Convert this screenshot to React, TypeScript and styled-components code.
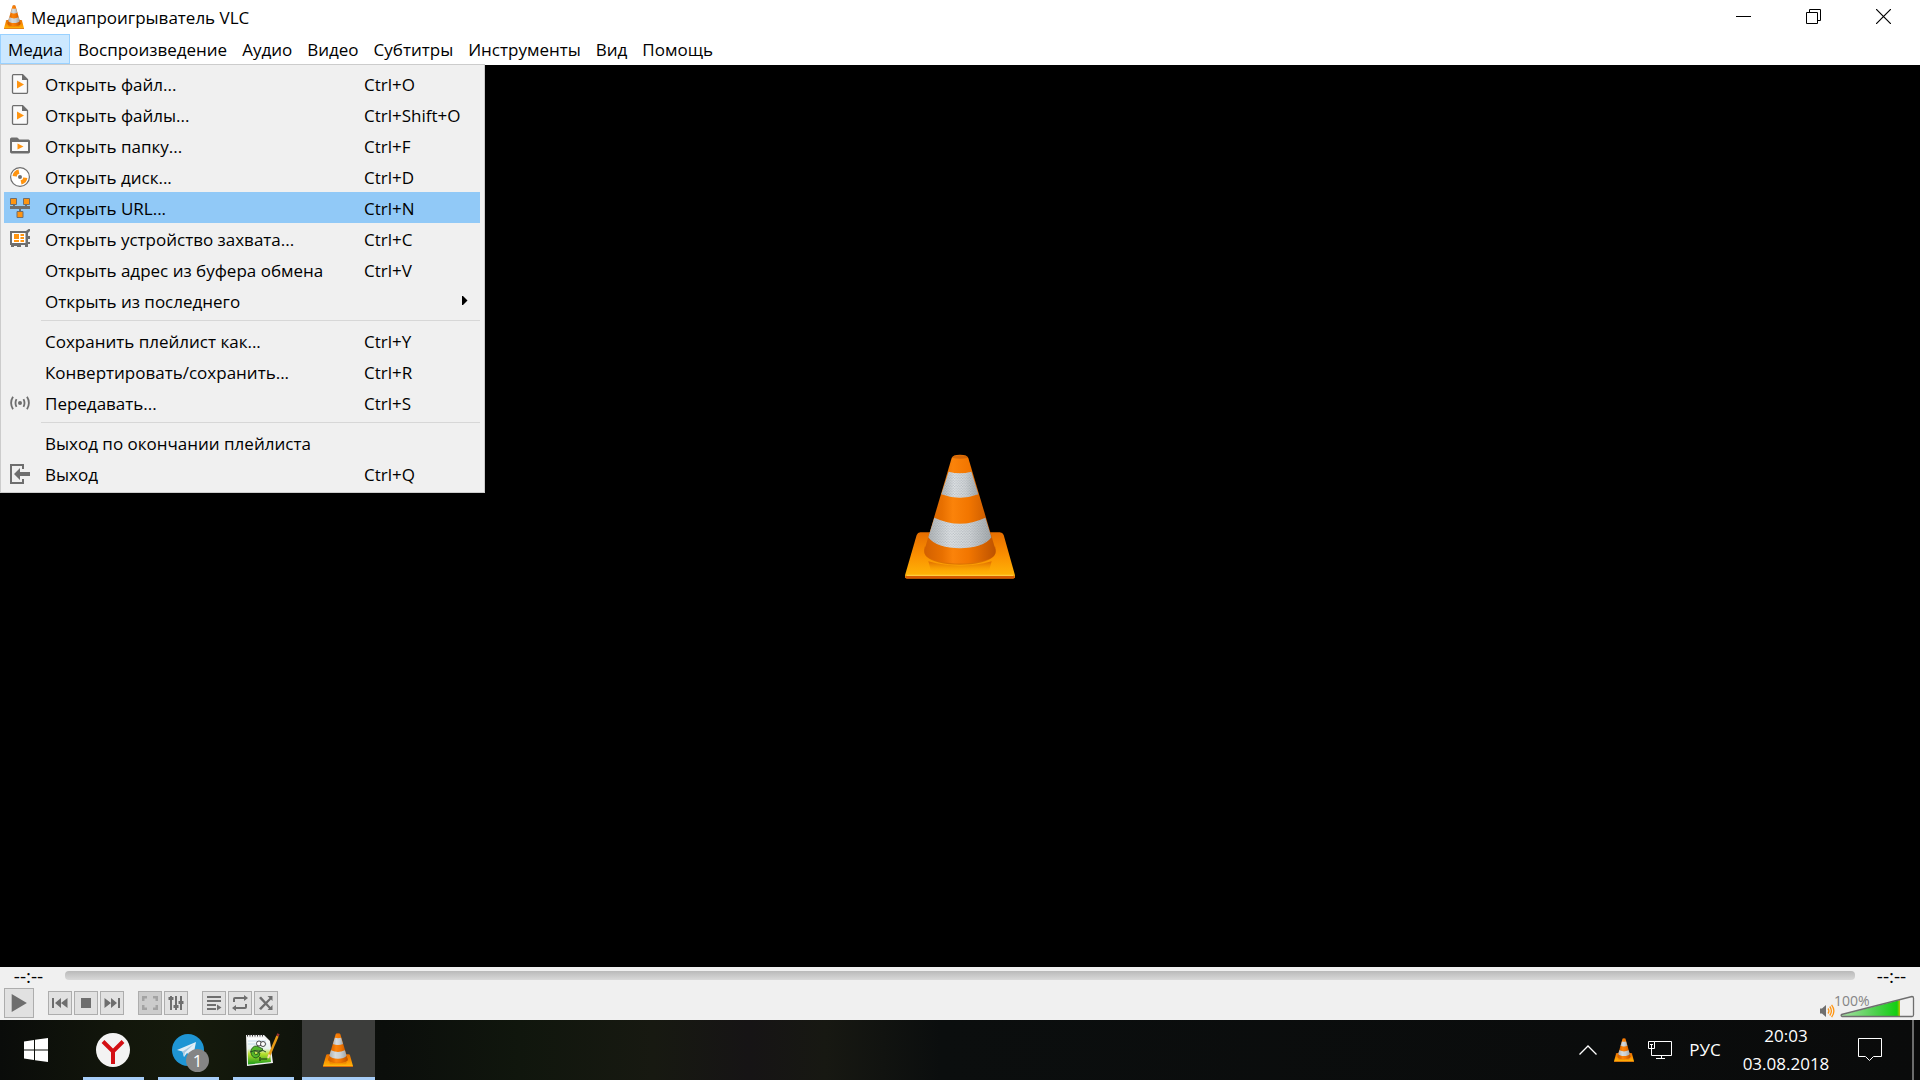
import React, { useId } from "react";
import styled, { createGlobalStyle, css } from "styled-components";

const GlobalStyle = createGlobalStyle`
  *, *::before, *::after { box-sizing: border-box; }
  html, body, #root { height: 100%; }
  body { margin: 0; overflow: hidden; font-family: "Open Sans", "Noto Sans", sans-serif; font-size: 17px; color: #000; }
  button { font: inherit; color: inherit; margin: 0; padding: 0; border: 0; background: none; }
  svg { display: block; }
`;

const Desktop = styled.div`
  height: 100vh;
  display: flex;
  flex-direction: column;
  background: #000;
`;

const Player = styled.main`
  flex: 1;
  min-height: 0;
  display: flex;
  flex-direction: column;
`;

const TitleBar = styled.header`
  height: 34px;
  display: flex;
  align-items: flex-start;
  background: #fff;
  padding: 0 2px 0 4px;
`;

const TitleIcon = styled.span`
  padding-top: 5px;
`;

const Title = styled.h1`
  flex: 1;
  margin: 0;
  padding: 6px 0 0 7px;
  font-size: 17px;
  line-height: 24px;
  font-weight: 400;
`;

const WindowButton = styled.button`
  width: 70px;
  height: 32px;
  display: grid;
  place-items: center;
`;

const MenuBar = styled.nav`
  position: relative;
  height: 31px;
  display: flex;
  align-items: flex-start;
  background: #fff;
`;

const MenuBarButton = styled.button<{ $open?: boolean }>`
  height: 30px;
  padding: 2px 6px 0 7px;
  line-height: 26px;
  border: 1px solid transparent;
  ${(p) => p.$open && css`background: #cce8ff; border-color: #99d1ff;`}
`;

const DropDown = styled.ul`
  position: absolute;
  z-index: 2;
  left: 0;
  top: 30px;
  width: 485px;
  margin: 0;
  padding: 3px 4px 3px 3px;
  list-style: none;
  background: #f0f0f0;
  border: 1px solid #ccc;
`;

const MenuItem = styled.button<{ $active?: boolean }>`
  width: 100%;
  height: 31px;
  display: grid;
  grid-template-columns: 35px 319px 1fr;
  align-items: center;
  padding: 0 12px 0 6px;
  text-align: left;
  line-height: 28px;
  background: ${(p) => (p.$active ? "#91c9f7" : "transparent")};
`;

const Separator = styled.li`
  height: 1px;
  margin: 4px 0 4px 37px;
  background: #d7d7d7;
`;

const ItemLabel = styled.span`
  padding-top: 2px;
`;

const SubmenuArrow = styled.svg`
  justify-self: end;
`;

const VideoArea = styled.section`
  flex: 1;
  display: grid;
  place-items: center;
  background: #000;
`;

const Controls = styled.footer`
  background: #f0f0f0;
`;

const SeekRow = styled.div`
  height: 21px;
  display: flex;
  align-items: flex-start;
  gap: 8px;
  padding: 0 8px;
`;

const Time = styled.time`
  width: 49px;
  text-align: center;
  font-size: 19px;
  line-height: 18px;
  padding-right: 8px;
`;

const EndTime = styled(Time)`
  padding: 0 0 0 8px;
`;

const Seek = styled.input`
  flex: 1;
  min-width: 0;
  height: 9px;
  margin: 4px 0 0;
  appearance: none;
  border-radius: 4px;
  background: linear-gradient(#b9b9b9, #d9d9d9);
  &::-webkit-slider-thumb { appearance: none; width: 0; height: 0; }
`;

const ButtonRow = styled.div`
  height: 32px;
  display: flex;
  align-items: flex-start;
  gap: 14px;
  padding: 0 5px 0 4px;
`;

const Group = styled.div`
  display: flex;
  gap: 2px;
  padding-top: 3px;
`;

const ControlButton = styled.button<{ $size?: number; $dim?: boolean }>`
  width: ${(p) => p.$size ?? 24}px;
  height: ${(p) => p.$size ?? 24}px;
  display: grid;
  place-items: center;
  border: 1px solid #adadad;
  background: ${(p) => (p.$dim ? "#ccc" : "#e1e1e1")};
  color: ${(p) => (p.$dim ? "#a3a3a3" : "#6e6e6e")};
`;

const Volume = styled.div`
  position: relative;
  margin-left: auto;
  display: flex;
  align-items: flex-end;
  gap: 5px;
  height: 30px;
`;

const VolumeText = styled.output`
  position: absolute;
  left: 14px;
  top: 3px;
  font-size: 14px;
  line-height: 20px;
  color: #858585;
`;

const VolumeSlider = styled.input`
  position: absolute;
  right: 0;
  bottom: 0;
  width: 76px;
  height: 24px;
  margin: 0;
  opacity: 0;
`;

const TaskBar = styled.footer`
  height: 60px;
  display: flex;
  color: #fff;
  background: linear-gradient(90deg, #0a0c0a 0, #12160b 6%, #151a0c 10%, #10140c 15%, #0b0e0b 20%, #10160d 27%, #171911 34%, #161415 39%, #171812 43%, #0b0e0e 49%, #0a0b0b 100%);
`;

const StartButton = styled.button`
  width: 72px;
  margin-right: 5px;
  display: grid;
  place-items: center;
`;

const TaskButton = styled.button<{ $active?: boolean }>`
  width: 73px;
  margin-right: 2px;
  display: grid;
  grid-template-rows: 1fr 3px;
  justify-items: center;
  align-items: center;
  background: ${(p) => (p.$active ? "#3c3d3b" : "transparent")};
  &::after {
    content: "";
    width: ${(p) => (p.$active ? 73 : 61)}px;
    height: 3px;
    background: #a6cdf7;
  }
`;

const AppIcon = styled.span`
  position: relative;
  padding: 3px 1px 0 0;
`;

const Badge = styled.span`
  position: absolute;
  left: 14px;
  top: 18px;
  width: 23px;
  height: 23px;
  border-radius: 50%;
  background: #858585;
  font-size: 17px;
  line-height: 23px;
  text-align: center;
`;

const Tray = styled.div`
  margin-left: auto;
  display: flex;
  align-items: center;
`;

const TrayButton = styled.button<{ $w: number }>`
  width: ${(p) => p.$w}px;
  height: 60px;
  display: grid;
  place-items: center;
  line-height: 28px;
`;

const ShowDesktop = styled.button`
  width: 8px;
  height: 60px;
  border-left: 2px solid #6b6c6c;
`;

function Cone({ w, h }: { w: number; h: number }) {
  const id = useId();
  const u = (n: string) => `url(#${id}${n})`;
  return (
    <svg width={w} height={h} viewBox="45 40 330 375" preserveAspectRatio="none" aria-hidden="true">
      <defs>
        <linearGradient id={id + "base"} x1="0" y1="0" x2="0" y2="1">
          <stop offset="0" stopColor="#e56d00" />
          <stop offset=".5" stopColor="#fb9000" />
          <stop offset="1" stopColor="#ffb908" />
        </linearGradient>
        <linearGradient id={id + "body"}>
          <stop offset="0" stopColor="#d26000" />
          <stop offset=".25" stopColor="#e87000" />
          <stop offset=".4" stopColor="#fb830a" />
          <stop offset=".62" stopColor="#f27600" />
          <stop offset="1" stopColor="#bd5200" />
        </linearGradient>
        <linearGradient id={id + "white"}>
          <stop offset="0" stopColor="#b4b8ba" />
          <stop offset=".35" stopColor="#e3e6e8" />
          <stop offset=".65" stopColor="#d5d8da" />
          <stop offset="1" stopColor="#a6abad" />
        </linearGradient>
        <pattern id={id + "mesh"} width="8" height="8" patternUnits="userSpaceOnUse">
          <path d="M0 2h4M4 6h4" stroke="#6e7a84" strokeWidth="2.500" opacity=".5" />
        </pattern>
        <linearGradient id={id + "glow"} x1="0" y1="0" x2="0" y2="1">
          <stop offset="0" stopColor="#d76000" stopOpacity=".8" />
          <stop offset="1" stopColor="#ffb000" stopOpacity=".1" />
        </linearGradient>
      </defs>
      <path d="M91 275H329Q338 275 341 283L375 404V410Q375 413 370 413H50Q45 413 45 410V404L80 283Q83 275 91 275Z" fill={u("base")} />
      <path d="M46 405H374V410Q374 414 369 414H51Q46 414 46 410Z" fill="#d65b00" />
      <path d="M50 404H370" stroke="#ffd84c" strokeWidth="3" />
      <path d="M115 362Q210 388 305 362L298 388Q292 397 270 397H150Q128 397 122 388Z" fill={u("glow")} />
      <path d="M104 318Q99 336 108 346C135 381 285 381 312 346Q321 336 316 318Z" fill="#c95600" opacity=".6" />
      <path d="M185 52Q188 42 210 42Q232 42 235 52L316 326C318 337 315 343 308 349C275 375 145 375 112 349C105 343 102 337 104 326Z" fill={u("body")} />
      <path d="M186 51Q189 44 210 44Q231 44 234 51Q210 57 186 51Z" fill="#a94c08" opacity=".45" />
      <path d="M176 93Q210 102 244 93L265 161Q210 182 154 161Z" fill={u("white")} />
      <path d="M176 93Q210 102 244 93L265 161Q210 182 154 161Z" fill={u("mesh")} />
      <path d="M133 231Q210 267 286 231L304 290C277 334 143 334 115 290Z" fill={u("white")} />
      <path d="M133 231Q210 267 286 231L304 290C277 334 143 334 115 290Z" fill={u("mesh")} />
    </svg>
  );
}

const G = "#6e6e6e";
const O = "#ff9410";

const FileIcon = () => (
  <svg width="20" height="20" viewBox="0 0 20 20" fill="none">
    <path d="M3.500.5H12.500L17.500 5.500V18q0 1.500-1.500 1.500H4q-1.500 0-1.500-1.500V2Q2.500.500 4 .500Z" fill="#fafafa" stroke={G} strokeWidth="1.300" />
    <path d="M12 0L18 6H12Z" fill={G} />
    <path d="M7 6.500L14 10.500L7 14.500Z" fill={O} />
  </svg>
);
const FolderIcon = () => (
  <svg width="20" height="20" viewBox="0 0 20 20" fill="none">
    <path d="M.5 16V3q0-1 1-1H7.500L9 4H18.500q1 0 1 1V16q0 1-1 1H1.500q-1 0-1-1Z" fill={G} stroke={G} />
    <path d="M2 6H18V15H2Z" fill="#fafafa" />
    <path d="M7.500 7.500L13.500 10.500L7.500 13.500Z" fill={O} />
  </svg>
);
const DiscIcon = () => (
  <svg width="20" height="20" viewBox="0 0 20 20">
    <circle cx="10" cy="10" r="9.400" fill="#fff" stroke={G} strokeWidth="1.200" />
    <path d="M10 10L2.600 9A7.500 7.500 0 0 1 8.500 2.600Z" fill={O} />
    <path d="M10 10L17.400 11A7.500 7.500 0 0 1 11.500 17.400Z" fill={O} />
    <circle cx="10" cy="10" r="3.200" fill="#fff" />
    <circle cx="10" cy="10" r="2" fill={G} />
  </svg>
);
const NetworkIcon = () => (
  <svg width="20" height="20" viewBox="0 0 20 20">
    <path d="M3 6H5V8H3ZM15 6H17V8H15ZM0 8H20V11H0ZM9 11H11V13H9Z" fill={G} />
    <path d="M.5.5h6v6h-6zM13.500.5h6v6h-6zM7 13.500h6v6H7z" fill={O} stroke={G} />
  </svg>
);
const CaptureIcon = () => (
  <svg width="20" height="20" viewBox="0 0 20 20">
    <path d="M0 2H16L18.500 0H20V2L18 4V7H20V10H18V13H20V15H18V18H15V16H11V18H7V17H4V18H1V16H0Z" fill={G} />
    <path d="M2 4H15.500V14H2Z" fill="#fff" />
    <path d="M4 5h5v5H4zM4 11h5v2H4zM10.500 5H14v2h-3.500zM10.500 8H14v2h-3.500zM10.500 11H14v2h-3.500z" fill={O} />
  </svg>
);
const StreamIcon = () => (
  <svg width="20" height="20" viewBox="0 0 20 20" fill="none" stroke={G} strokeWidth="1.800">
    <circle cx="10" cy="10" r="2" fill={G} stroke="none" />
    <path d="M6.500 6.200Q4.500 10 6.500 13.800M13.500 6.200Q15.500 10 13.500 13.800M3 3.800Q-.8 10 3 16.200M17 3.800Q20.800 10 17 16.200" />
  </svg>
);
const QuitIcon = () => (
  <svg width="20" height="20" viewBox="0 0 20 20">
    <path d="M13 5V1H1V19H13V15" fill="none" stroke={G} strokeWidth="2" />
    <path d="M4 10L10 4V8H20V12H10V16Z" fill={G} />
  </svg>
);

type Entry = { label: string; keys?: string; icon?: React.ReactNode; active?: boolean; submenu?: boolean } | null;

const mediaMenu: Entry[] = [
  { label: "Открыть файл...", keys: "Ctrl+O", icon: <FileIcon /> },
  { label: "Открыть файлы...", keys: "Ctrl+Shift+O", icon: <FileIcon /> },
  { label: "Открыть папку...", keys: "Ctrl+F", icon: <FolderIcon /> },
  { label: "Открыть диск...", keys: "Ctrl+D", icon: <DiscIcon /> },
  { label: "Открыть URL...", keys: "Ctrl+N", icon: <NetworkIcon />, active: true },
  { label: "Открыть устройство захвата...", keys: "Ctrl+C", icon: <CaptureIcon /> },
  { label: "Открыть адрес из буфера обмена", keys: "Ctrl+V" },
  { label: "Открыть из последнего", submenu: true },
  null,
  { label: "Сохранить плейлист как...", keys: "Ctrl+Y" },
  { label: "Конвертировать/сохранить...", keys: "Ctrl+R" },
  { label: "Передавать...", keys: "Ctrl+S", icon: <StreamIcon /> },
  null,
  { label: "Выход по окончании плейлиста" },
  { label: "Выход", keys: "Ctrl+Q", icon: <QuitIcon /> },
];

const menus = ["Медиа", "Воспроизведение", "Аудио", "Видео", "Субтитры", "Инструменты", "Вид", "Помощь"];

const Glyph = ({ children, s = 16 }: { children: React.ReactNode; s?: number }) => (
  <svg width={s} height={s} viewBox="0 0 16 16" fill="currentColor">{children}</svg>
);

const groups = [
  [
    { name: "Предыдущее", d: <path d="M0 3h2v10H0zM9 3v10L3 8zM15.500 3v10L9 8z" /> },
    { name: "Стоп", d: <path d="M3 3h10v10H3z" /> },
    { name: "Следующее", d: <path d="M14 3h2v10h-2zM7 3v10l6-5zM.5 3v10L7 8z" /> },
  ],
  [
    { name: "Полный экран", dim: true, d: <path d="M0 1h5v2.500H2.500V6H0zM11 1h5v5h-2.500V3.500H11zM0 10h2.500v2.500H5V15H0zM13.500 10H16v5h-5v-2.500h2.500z" /> },
    { name: "Эффекты", d: <path d="M2 1h2v1h1.500v3H4v10H2V5H.5V2H2zM7 1h2v9h1.500v3H9v2H7v-2H5.500v-3H7zM12 1h2v5h1.500v3H14v6h-2V9h-1.500V6H12z" /> },
  ],
  [
    { name: "Плейлист", d: <path d="M1 1h14v2H1zM1 5h14v2H1zM1 9h9v2H1zM1 13h9v2H1zM11 9.500l4.500 3-4.500 3z" /> },
    { name: "Повтор", d: <path d="M1 7V4q0-2 2-2h9V0l4 3-4 3V4H3v3zM15 9v3q0 2-2 2H4v2l-4-3 4-3v2h9V9z" /> },
    { name: "Случайно", d: <path d="M1 3l2-1.500L12.500 12 14.500 10V15H9.500l1.500-1.500zM9.500 1h5v5L13 4.500 3 15l-2-1.500L11.500 3z" /> },
  ],
];

export default function App() {
  return (
    <Desktop>
      <GlobalStyle />
      <Player>
        <TitleBar>
          <TitleIcon><Cone w={20} h={24} /></TitleIcon>
          <Title>Медиапроигрыватель VLC</Title>
          <WindowButton aria-label="Свернуть">
            <svg width="15" height="15" viewBox="0 0 15 15"><path d="M0 7h15v1H0z" /></svg>
          </WindowButton>
          <WindowButton aria-label="Восстановить">
            <svg width="15" height="15" viewBox="0 0 15 15" fill="none" stroke="#000"><path d="M.5 3.500h11v11H.5zM3.500 3.500v-3h11v11h-3" /></svg>
          </WindowButton>
          <WindowButton aria-label="Закрыть">
            <svg width="15" height="15" viewBox="0 0 15 15" stroke="#000" strokeWidth="1.200"><path d="M0 0L15 15M15 0L0 15" /></svg>
          </WindowButton>
        </TitleBar>
        <MenuBar>
          {menus.map((m, i) => (
            <MenuBarButton key={m} $open={i === 0}>{m}</MenuBarButton>
          ))}
          <DropDown>
            {mediaMenu.map((e, i) =>
              e === null ? (
                <Separator key={i} role="separator" />
              ) : (
                <li key={i}>
                  <MenuItem $active={e.active}>
                    <span>{e.icon}</span>
                    <ItemLabel>{e.label}</ItemLabel>
                    {e.submenu ? (
                      <SubmenuArrow width="6" height="9" viewBox="0 0 6 9"><path d="M0 0h1l4.500 4.500L1 9H0z" /></SubmenuArrow>
                    ) : (
                      <ItemLabel>{e.keys}</ItemLabel>
                    )}
                  </MenuItem>
                </li>
              )
            )}
          </DropDown>
        </MenuBar>
        <VideoArea>
          <Cone w={110} h={125} />
        </VideoArea>
        <Controls>
          <SeekRow>
            <Time>--:--</Time>
            <Seek type="range" aria-label="Позиция" defaultValue={0} />
            <EndTime>--:--</EndTime>
          </SeekRow>
          <ButtonRow>
            <ControlButton $size={30} aria-label="Воспроизвести">
              <Glyph s={18}><path d="M1.500 0L15 8L1.500 16z" /></Glyph>
            </ControlButton>
            {groups.map((g, i) => (
              <Group key={i}>
                {g.map((b) => (
                  <ControlButton key={b.name} aria-label={b.name} $dim={"dim" in b}>
                    <Glyph>{b.d}</Glyph>
                  </ControlButton>
                ))}
              </Group>
            ))}
            <Volume>
              <svg width="15" height="14" viewBox="0 0 15 14">
                <path d="M0 4.500h2L6 1v12L2 9.500H0z" fill={G} />
                <path d="M8 4.500q1.800 2.500 0 5M9.800 2.500q3.200 4.500 0 9M11.600.800q4.600 6.200 0 12.400" fill="none" stroke={O} strokeWidth="1.300" />
              </svg>
              <svg width="75" height="23" viewBox="0 0 75 23">
                <defs>
                  <linearGradient id="volumeFill">
                    <stop offset="0" stopColor="#a8dfa5" />
                    <stop offset=".6" stopColor="#4bd04b" />
                    <stop offset=".95" stopColor="#12cf12" />
                    <stop offset="1" stopColor="#c2c400" />
                  </linearGradient>
                </defs>
                <path d="M1 20L60 5V21H1z" fill="url(#volumeFill)" />
                <path d="M1.500 19.500L72 1.500q1.500 0 1.500 1.500V20q0 1.500-1.500 1.500H2q-1.500-1-.500-2z" fill="none" stroke={G} strokeWidth="1.300" />
              </svg>
              <VolumeText>100%</VolumeText>
              <VolumeSlider type="range" aria-label="Громкость" max={125} defaultValue={100} />
            </Volume>
          </ButtonRow>
        </Controls>
      </Player>
      <TaskBar>
        <StartButton aria-label="Пуск">
          <svg width="24" height="24" viewBox="0 0 24 24" fill="#fff">
            <path d="M0 3.500L10 2V11.500H0zM11 1.800L24 0V11.500H11zM0 12.500H10V22L0 20.600zM11 12.500H24V24L11 22.200z" />
          </svg>
        </StartButton>
        <TaskButton aria-label="Яндекс Браузер">
          <AppIcon>
            <svg width="34" height="34" viewBox="0 0 34 34">
              <circle cx="17" cy="17" r="17" fill="#f3f3f3" />
              <path d="M7 8.500L17 18.500L27 8.500M17 17V31" fill="none" stroke="#d40f14" strokeWidth="4" />
            </svg>
          </AppIcon>
        </TaskButton>
        <TaskButton aria-label="Telegram">
          <AppIcon>
            <svg width="32" height="32" viewBox="0 0 32 32">
              <circle cx="16" cy="16" r="16" fill="#1f95d4" />
              <path d="M5 16L24 8L21 23L15 19L12 23L10.500 17.500Z" fill="#e4eff7" />
              <path d="M10.500 17.500L22 10L13 18.500L12 23Z" fill="#a9c9e0" />
            </svg>
            <Badge>1</Badge>
          </AppIcon>
        </TaskButton>
        <TaskButton aria-label="Notepad++">
          <AppIcon>
            <svg width="34" height="34" viewBox="0 0 34 34">
              <defs>
                <linearGradient id="paper" x1="0" y1="0" x2="0" y2="1">
                  <stop offset="0" stopColor="#fff" />
                  <stop offset=".4" stopColor="#e6f2ee" />
                  <stop offset=".6" stopColor="#b8e02c" />
                  <stop offset="1" stopColor="#1c9c1c" />
                </linearGradient>
              </defs>
              <path d="M0 2H18L24 8L27 30L1 33Z" fill="#f2f2f2" />
              <path d="M1.500 5H18L23 9L25 29L2 31.500Z" fill="url(#paper)" />
              <path d="M1 2.500H18" stroke="#333" strokeWidth="2" strokeDasharray="1 1.500" />
              <path d="M2 8H20M2 11H21" stroke="#b8d4ea" strokeWidth=".8" />
              <path d="M5 17Q8 11 13 14L17 16L15 18Q9 16 8 20Q9 23 12 21L12 19L14 20Q14 24 10 25Q5 24 5 19Z" fill="#53b82c" stroke="#234d18" strokeWidth=".8" />
              <path d="M4 19L9 17.500L12 19L17 17.500L20 19" fill="none" stroke="#274d20" />
              <circle cx="13" cy="10.500" r="2.500" fill="#fff" stroke="#222" strokeWidth=".8" />
              <circle cx="17" cy="11" r="2.500" fill="#fff" stroke="#222" strokeWidth=".8" />
              <path d="M14 24V28M15 26H21" stroke="#173117" strokeWidth="1.200" />
              <path d="M22.500 24L31.500 3" stroke="#e79a16" strokeWidth="2.500" />
              <path d="M22 25L23.500 21.500" stroke="#f6dfb0" strokeWidth="2" />
              <path d="M31.500 3L32.500 .8" stroke="#9b3030" strokeWidth="2.500" />
            </svg>
          </AppIcon>
        </TaskButton>
        <TaskButton $active aria-label="VLC">
          <AppIcon><Cone w={30} h={34} /></AppIcon>
        </TaskButton>
        <Tray>
          <TrayButton $w={36} aria-label="Скрытые значки">
            <svg width="18" height="10" viewBox="0 0 18 10" fill="none" stroke="#fff" strokeWidth="1.300"><path d="M.5 9.500L9 1L17.500 9.500" /></svg>
          </TrayButton>
          <TrayButton $w={36} aria-label="VLC"><Cone w={20} h={24} /></TrayButton>
          <TrayButton $w={36} aria-label="Сеть">
            <svg width="24" height="19" viewBox="0 0 24 19" fill="none" stroke="#fff">
              <path d="M6.500.5H23.500V14.500H3.500V9M13.500 14.500V17.500M8 17.500H17M.5.5H6.500V7.500H.5zM2 3.500H5M3.500 3.500V9" />
            </svg>
          </TrayButton>
          <TrayButton $w={54}>РУС</TrayButton>
          <TrayButton $w={108}>
            <span>20:03<br />03.08.2018</span>
          </TrayButton>
          <TrayButton $w={60} aria-label="Уведомления">
            <svg width="24" height="24" viewBox="0 0 24 24" fill="none" stroke="#fff"><path d="M.5.5H23.500V18.500H15.500L11.500 22.500L7.500 18.500H.5z" /></svg>
          </TrayButton>
        </Tray>
        <TrayButton $w={12} aria-hidden="true" tabIndex={-1} />
        <ShowDesktop aria-label="Показать рабочий стол" />
      </TaskBar>
    </Desktop>
  );
}
